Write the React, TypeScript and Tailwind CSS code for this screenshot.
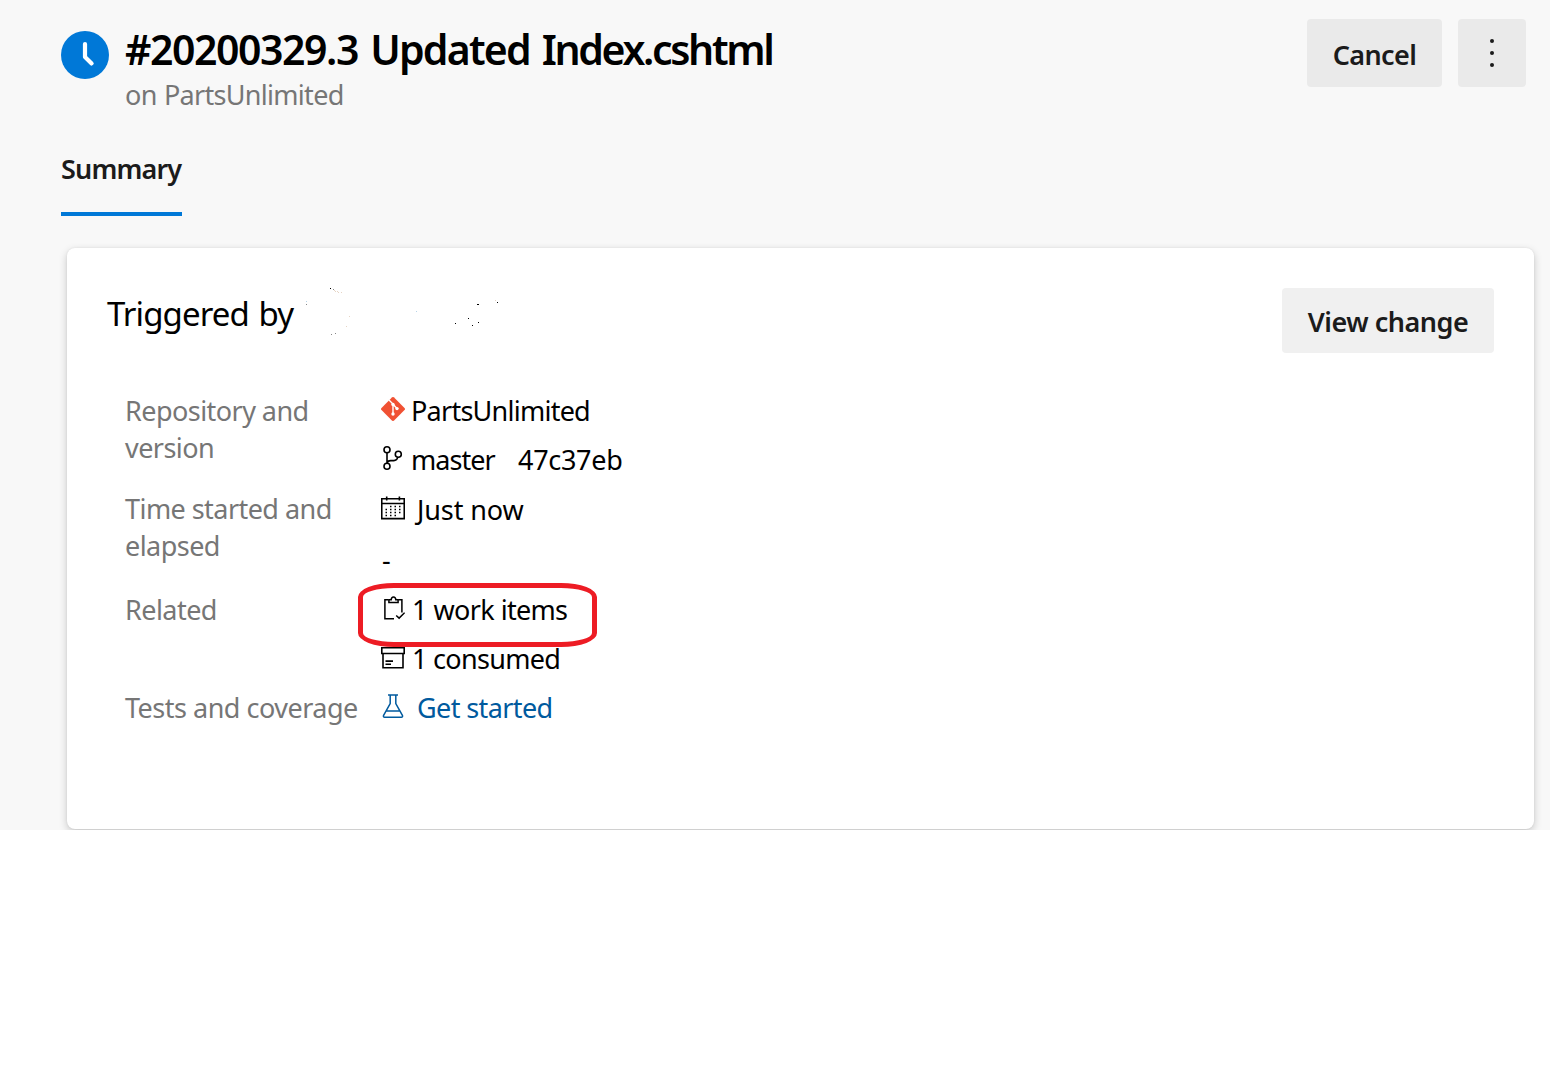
import type { ReactNode } from 'react';

function ClockBadge() {
  return (
    <svg className="mt-[31px] block h-12 w-12 shrink-0" viewBox="0 0 48 48" fill="none">
      <circle cx="24" cy="24" r="24" fill="#0078d7" />
      <path d="M24 13v13l6.6 6.4" stroke="#fff" strokeWidth="4.2" strokeLinecap="round" strokeLinejoin="round" />
    </svg>
  );
}

function GitIcon() {
  return (
    <svg className="block h-6 w-6" viewBox="0 0 24 24" fill="none">
      <path d="M10.9.5a1.6 1.6 0 0 1 2.2 0l10.4 10.4a1.6 1.6 0 0 1 0 2.2L13.1 23.5a1.6 1.6 0 0 1-2.2 0L.5 13.1a1.6 1.6 0 0 1 0-2.2z" fill="#f05133" />
      <path d="M8 3l4 4v9.6M12 7.2l4 4.3" stroke="#fff" strokeWidth="1.4" />
      <circle cx="12" cy="7.4" r="1.7" fill="#fff" />
      <circle cx="16" cy="11.6" r="1.7" fill="#fff" />
      <circle cx="12" cy="17" r="1.7" fill="#fff" />
    </svg>
  );
}

function BranchIcon() {
  return (
    <svg className="block h-6 w-6" viewBox="0 0 24 24" fill="none" stroke="#000" strokeWidth="1.6">
      <circle cx="6" cy="3.8" r="3" />
      <circle cx="6" cy="20.2" r="3" />
      <circle cx="17.3" cy="8.2" r="3" />
      <path d="M6 6.8v10.4M16.8 11.2c-.5 2.3-1.8 3.4-4 3.4H9.7c-2 0-3.4.8-3.7 2.8" />
    </svg>
  );
}

function CalendarIcon() {
  return (
    <svg className="block h-6 w-6" viewBox="0 0 24 24" fill="none" stroke="#000">
      <path d="M.75 2.75h22.5v19.9H.75zM.75 7.5h22.5M5.7.5v4M18.4.5v4" strokeWidth="1.6" />
      <path d="M9 10.5h1.5m3 0H15m3 0h1.5M4.5 13.5H6m3 0h1.5m3 0H15m3 0h1.5M4.5 16.5H6m3 0h1.5m3 0H15m3 0h1.5M4.5 19.5H6m3 0h1.5m3 0H15" strokeWidth="1.3" />
    </svg>
  );
}

function ClipboardIcon() {
  return (
    <svg className="block h-6 w-6" viewBox="0 0 24 24" fill="none" stroke="#000" strokeWidth="1.5">
      <path d="M13 22.8H3.9V3.8h3.5M17.4 3.8h3.5v12.8" />
      <path d="M7.9 6.5V3.8h2.3c.1-1.9.9-2.9 2.3-2.9s2.2 1 2.3 2.9h2.3v2.7z" />
      <path d="M15.2 19.5l2.9 2.6 5.5-5.4" />
    </svg>
  );
}

function ArchiveIcon() {
  return (
    <svg className="mt-px block h-6 w-6" viewBox="0 0 24 24" fill="none" stroke="#000" strokeWidth="1.6">
      <path d="M.8 1.8h22.4v5.7H.8zM2 7.5v14.2h20V7.5M4.5 15.1H12M4.5 18.3H10" />
    </svg>
  );
}

function FlaskIcon() {
  return (
    <svg className="block h-6 w-6" viewBox="0 0 24 24" fill="none" stroke="#005a9e" strokeWidth="1.5">
      <path d="M7 1h10M9.2 1v8.5L2.6 21.3c-.5 1 0 1.9 1 1.9h16.8c1 0 1.5-.9 1-1.9L14.8 9.5V1M5.5 17h13" />
    </svg>
  );
}

/* Specks left where the author's name and avatar were erased. */
function ErasedName() {
  return (
    <svg className="mt-[39px] block h-[50px] w-[214px]" viewBox="290 287 214 50" fill="#000" shapeRendering="crispEdges">
      <path d="M330 288h1v1h-1zM477 304h2v1h-2zM497 302h1v1h-1zM468 318h1v1h-1zM478 322h1v1h-1zM472 325h1v1h-1zM455 323h1v1h-1z" />
      <path d="M333 289h1v1h-1zM306 304h1v1h-1zM331 334h1v1h-1zM335 333h1v1h-1z" fill="#888" />
      <path d="M334 290h1v1h-1zM335 291h1v1h-1zM337 291h1v1h-1zM338 292h1v1h-1zM341 292h1v1h-1zM349 316h1v1h-1zM346 326h1v1h-1zM495 300h1v1h-1z" fill="#e6d5c5" />
      <path d="M306 301h1v1h-1zM416 311h1v1h-1z" fill="#b8d4e8" />
    </svg>
  );
}

function Value({ icon, children }: { icon: ReactNode; children: ReactNode }) {
  return (
    <div className="flex h-[37px]">
      <div className="mt-[5px] w-6 shrink-0">{icon}</div>
      {children}
    </div>
  );
}

export default function App() {
  return (
    <div className="h-[1080px] w-[1550px] overflow-hidden bg-white font-['Noto_Sans','Open_Sans',sans-serif] text-[27px] leading-[37px] text-black">
      <main className="h-[830px] overflow-hidden bg-[#f8f8f8]">
        <header className="flex h-[151px] pl-[61px] pr-6">
          <ClockBadge />
          <div className="ml-4 mt-[21px] grow whitespace-nowrap">
            <h1 className="text-[41px] font-semibold leading-[57px] tracking-[-1.45px] [word-spacing:3px]">
              #20200329.3 <span className="tracking-[-1.8px]">Updated </span><span className="tracking-[-2.35px]">Index.cshtml</span>
            </h1>
            <p className="-mt-0.5 tracking-[-0.7px] text-[#767676] [word-spacing:1px]">on PartsUnlimited</p>
          </div>
          <div className="mt-[19px] flex h-[68px] gap-4 text-[#1b1b1b]">
            <button className="w-[135px] rounded bg-[#eaeaea] pt-0.5 font-semibold tracking-[-0.6px]">Cancel</button>
            <button className="flex w-[68px] flex-col items-center gap-2 rounded bg-[#eaeaea] pt-5">
              <span className="h-1 w-1 rounded-full bg-[#1b1b1b]" />
              <span className="h-1 w-1 rounded-full bg-[#1b1b1b]" />
              <span className="h-1 w-1 rounded-full bg-[#1b1b1b]" />
            </button>
          </div>
        </header>
        <nav className="-mt-px flex h-[98px] pl-[61px]">
          <div className="h-[66px] w-[121px] whitespace-nowrap border-b-4 border-[#0078d7] font-semibold tracking-[-0.85px] text-[#1b1b1b]">Summary</div>
        </nav>
        <section className="ml-[67px] h-[581px] w-[1467px] rounded-lg bg-white shadow-[0_3px_8px_rgba(0,0,0,0.2),0_0_2px_rgba(0,0,0,0.08)]">
          <div className="flex h-36 pl-10 pr-10">
            <h2 className="w-[183px] whitespace-nowrap pt-[43px] text-[33px] leading-[46px] tracking-[-0.9px] [word-spacing:2px]">Triggered by</h2>
            <ErasedName />
            <button className="ml-auto mt-10 h-[65px] w-[212px] rounded bg-[#f0f0f0] pt-0.5 font-semibold tracking-[-0.5px] text-[#1b1b1b]">View change</button>
          </div>
          <dl className="grid grid-cols-[256px_1fr] grid-rows-[98px_101px_98px_98px] whitespace-nowrap pl-[58px] [&>dt]:text-[#767676]">
            <dt className="tracking-[-0.55px]">Repository and<br />version</dt>
            <dd className="flex flex-col gap-3">
              <Value icon={<GitIcon />}><span className="ml-1.5 tracking-[-0.75px]">PartsUnlimited</span></Value>
              <Value icon={<BranchIcon />}>
                <span className="ml-1.5 w-[107px] tracking-[-0.95px]">master</span>
                <span className="tracking-[-0.3px]">47c37eb</span>
              </Value>
            </dd>
            <dt className="tracking-[-0.55px]">Time started and<br />elapsed</dt>
            <dd className="flex flex-col gap-[13px] pt-px">
              <Value icon={<CalendarIcon />}><span className="ml-[12px] tracking-[-0.1px]">Just now</span></Value>
              <div className="pl-px">-</div>
            </dd>
            <dt className="tracking-[-0.55px]">Related</dt>
            <dd className="flex flex-col gap-3">
              <div className="relative">
                <Value icon={<ClipboardIcon />}><span className="ml-[7px] tracking-[-0.7px] [word-spacing:0.5px]">1 work items</span></Value>
                <div className="absolute left-[-23px] top-[-8px] h-16 w-[239px] rounded-[36px/14px] border-[5px] border-[#ed1c24]" />
              </div>
              <Value icon={<ArchiveIcon />}><span className="ml-[7px] tracking-[-0.7px]">1 consumed</span></Value>
            </dd>
            <dt className="tracking-[-0.5px]">Tests and coverage</dt>
            <dd>
              <Value icon={<FlaskIcon />}><span className="ml-3 tracking-[-0.6px] text-[#005a9e]">Get started</span></Value>
            </dd>
          </dl>
        </section>
      </main>
    </div>
  );
}
